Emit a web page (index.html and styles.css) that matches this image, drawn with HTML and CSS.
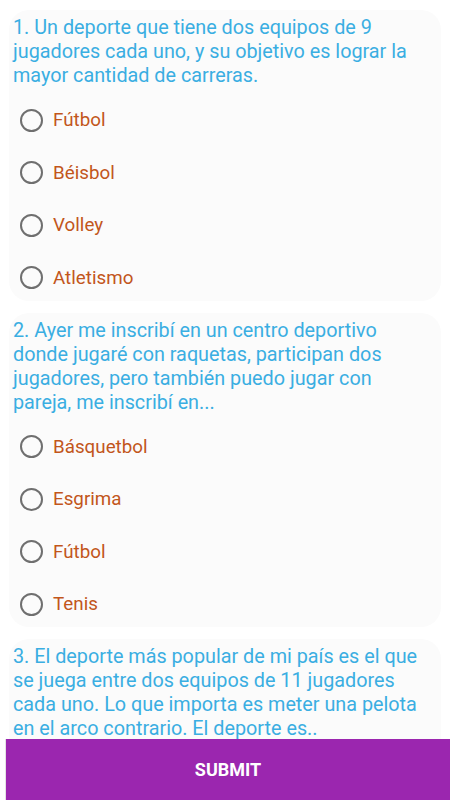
FILE: index.html
```html
<!DOCTYPE html>
<html lang="es">

<head>
    <meta charset="UTF-8">
    <meta name="viewport" content="width=device-width, initial-scale=1">
    <title>Quiz</title>
    <link rel="stylesheet" href="styles.css">
</head>

<body>

    <form id="quizForm" class="quiz">

        <div class="card">
            <p class="question">1. Un deporte que tiene dos equipos de 9 jugadores cada uno, y su objetivo es lograr la mayor cantidad de carreras.</p>
            <div class="options">
                <label class="option"><input type="radio" name="q1" value="futbol"><span class="ring"></span>Fútbol</label>
                <label class="option"><input type="radio" name="q1" value="beisbol"><span class="ring"></span>Béisbol</label>
                <label class="option"><input type="radio" name="q1" value="volley"><span class="ring"></span>Volley</label>
                <label class="option"><input type="radio" name="q1" value="atletismo"><span class="ring"></span>Atletismo</label>
            </div>
        </div>

        <div class="card">
            <p class="question">2. Ayer me inscribí en un centro deportivo donde jugaré con raquetas, participan dos jugadores, pero también puedo jugar con pareja, me inscribí en...</p>
            <div class="options">
                <label class="option"><input type="radio" name="q2" value="basquetbol"><span class="ring"></span>Básquetbol</label>
                <label class="option"><input type="radio" name="q2" value="esgrima"><span class="ring"></span>Esgrima</label>
                <label class="option"><input type="radio" name="q2" value="futbol"><span class="ring"></span>Fútbol</label>
                <label class="option"><input type="radio" name="q2" value="tenis"><span class="ring"></span>Tenis</label>
            </div>
        </div>

        <div class="card">
            <p class="question">3. El deporte más popular de mi país es el que se juega entre dos equipos de 11 jugadores cada uno. Lo que importa es meter una pelota en el arco contrario. El deporte es..</p>
            <div class="options">
                <label class="option"><input type="radio" name="q3" value="futbol"><span class="ring"></span>Fútbol</label>
                <label class="option"><input type="radio" name="q3" value="rugby"><span class="ring"></span>Rugby</label>
                <label class="option"><input type="radio" name="q3" value="handball"><span class="ring"></span>Handball</label>
                <label class="option"><input type="radio" name="q3" value="hockey"><span class="ring"></span>Hockey</label>
            </div>
        </div>

    </form>

    <div class="submit-bar">
        <button type="button" class="submit-btn">SUBMIT</button>
    </div>

</body>

</html>
```

FILE: styles.css
```css
body {
    margin: 0;
    height: 100vh;
    display: flex;
    flex-direction: column;
    background-color: #ffffff;
    font-family: Roboto, "Noto Sans", Arial, sans-serif;
}

.quiz {
    flex: 1;
    overflow-y: auto;
    scrollbar-width: none;
    display: flex;
    flex-direction: column;
    gap: 12px;
    padding: 10px 9px 10px 9px;
}

.card {
    flex-shrink: 0;
    background-color: #fbfbfb;
    border-radius: 20px;
    padding: 6px 12px 0 4px;
}

.question {
    margin: 0;
    font-size: 19.8px;
    line-height: 24px;
    color: #3aaee2;
}

.options {
    display: flex;
    flex-direction: column;
    gap: 6.5px;
    margin-top: 9px;
}

.option {
    display: flex;
    align-items: center;
    height: 46px;
    padding-left: 7px;
    font-size: 18.8px;
    color: #c2561b;
    cursor: pointer;
}

.option input {
    display: none;
}

.ring {
    width: 19px;
    height: 19px;
    border: 2px solid #6f6f6f;
    border-radius: 50%;
    margin-right: 10px;
    flex-shrink: 0;
}

.submit-bar {
    flex-shrink: 0;
    height: 61px;
    margin-left: 5px;
    border-left: 1px solid #e4e4e4;
    background-color: #9b26af;
}

.submit-btn {
    width: 100%;
    height: 100%;
    border: none;
    background: transparent;
    color: #ffffff;
    font-family: Roboto, Arial, sans-serif;
    font-weight: bold;
    font-size: 18px;
    cursor: pointer;
}
```
